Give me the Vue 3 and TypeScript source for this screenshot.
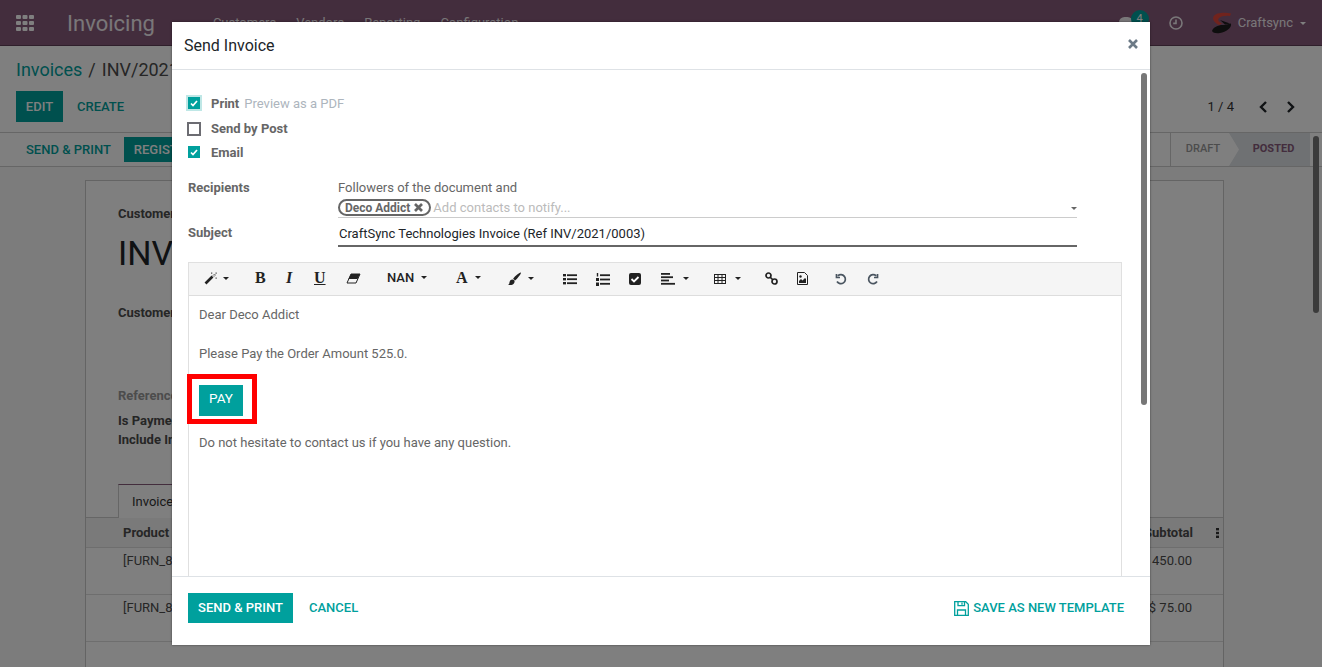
<script setup lang="ts">
const menus: string[] = ['Customers', 'Vendors', 'Reporting', 'Configuration']
const rows: { code: string; total: string }[] = [
  { code: '[FURN_8', total: '$ 450.00' },
  { code: '[FURN_8', total: '$ 75.00' },
]
</script>

<template>
  <div class="page">
    <header class="navbar">
      <svg class="apps" width="18" height="16" viewBox="0 0 18 16" fill="#fff">
        <rect x="0" y="0" width="5" height="4" rx="1" /><rect x="6.5" y="0" width="5" height="4" rx="1" /><rect x="13" y="0" width="5" height="4" rx="1" />
        <rect x="0" y="6" width="5" height="4" rx="1" /><rect x="6.5" y="6" width="5" height="4" rx="1" /><rect x="13" y="6" width="5" height="4" rx="1" />
        <rect x="0" y="12" width="5" height="4" rx="1" /><rect x="6.5" y="12" width="5" height="4" rx="1" /><rect x="13" y="12" width="5" height="4" rx="1" />
      </svg>
      <span class="brand">Invoicing</span>
      <nav class="menu"><span v-for="m in menus" :key="m">{{ m }}</span></nav>
      <div class="nav-right">
        <span class="chat"><i class="bubble"></i><b class="badge">4</b></span>
        <svg class="clock" width="14" height="14" viewBox="0 0 14 14" fill="none" stroke="#fff" stroke-width="1.6">
          <circle cx="7" cy="7" r="6" /><path d="M7 3.5V7.4H4.2" />
        </svg>
        <svg class="logo" width="22" height="22" viewBox="0 0 22 22">
          <path d="M20 1.500C14 .2 5 .5 2.500 4.500 1 8 4 11 8 13L11 11.500C8 10 6 8 8 6 10 4 15 3.500 19 4Z" fill="#e2473a" />
          <path d="M9 8 19 11.500 14 12.500Z" fill="#1c1c1c" />
          <path d="M1 19C2 15 8 12.500 13 13L20 11.500C21 16 15 20 9 21 5 21.500 2 21 1 19Z" fill="#1c1c1c" />
        </svg>
        <span class="user">Craftsync</span><i class="caret user-caret"></i>
      </div>
    </header>

    <section class="control">
      <div class="crumbs"><a>Invoices</a><span>/</span><span>INV/2021/0003</span></div>
      <div class="cp-row">
        <button class="btn-primary edit">EDIT</button>
        <button class="btn-link create">CREATE</button>
        <div class="pager">
          <span>1 / 4</span>
          <svg width="10" height="12" viewBox="0 0 10 12" fill="none" stroke="#212529" stroke-width="2.400"><path d="M8 1 3 6l5 5" /></svg>
          <svg width="10" height="12" viewBox="0 0 10 12" fill="none" stroke="#212529" stroke-width="2.400"><path d="m2 1 5 5-5 5" /></svg>
        </div>
      </div>
    </section>
    <section class="statusbar">
      <button class="btn-link">SEND &amp; PRINT</button>
      <button class="btn-primary reg">REGISTER PAYMENT</button>
      <div class="steps">
        <span class="step">DRAFT</span>
        <span class="step current">POSTED</span>
      </div>
    </section>

    <main class="content">
      <div class="sheet">
        <div class="sheet-pad">
          <div class="f-label">Customer Invoice</div>
          <h1>INV/2021/0003</h1>
          <div class="f-label cust">Customer</div>
          <div class="f-label ref">Reference</div>
          <div class="f-label pay-l">Is Payment</div>
          <div class="f-label inc">Include In</div>
        </div>
        <div class="tabs"><span class="tab">Invoice Lines</span></div>
        <div class="t-row t-head">
          <span>Product</span><span>Subtotal</span>
          <svg class="dots" width="3" height="10" viewBox="0 0 3 10" fill="#333"><rect width="3" height="2.400" /><rect y="3.800" width="3" height="2.400" /><rect y="7.600" width="3" height="2.400" /></svg>
        </div>
        <div v-for="(r, i) in rows" :key="i" class="t-row t-body"><span>{{ r.code }}</span><span>{{ r.total }}</span></div>
      </div>
    </main>
    <div class="page-scroll"></div>

    <div class="backdrop"></div>

    <div class="modal">
      <div class="m-head">
        <span class="m-title">Send Invoice</span>
        <svg class="close" width="10" height="10" viewBox="0 0 10 10" stroke="#6c7a86" stroke-width="2.600"><path d="m1 1 8 8M9 1 1 9" /></svg>
      </div>
      <div class="m-body">
        <div class="m-scroll"></div>
        <div class="checks">
          <label class="check"><i class="box on focus"><svg width="8" height="7" viewBox="0 0 8 7" fill="none" stroke="#fff" stroke-width="1.700"><path d="m1 3.500 2 2 4-4.500" /></svg></i><b>Print</b><em>Preview as a PDF</em></label>
          <label class="check"><i class="box off"></i><b>Send by Post</b></label>
          <label class="check"><i class="box on"><svg width="8" height="7" viewBox="0 0 8 7" fill="none" stroke="#fff" stroke-width="1.700"><path d="m1 3.500 2 2 4-4.500" /></svg></i><b>Email</b></label>
        </div>
        <div class="form">
          <b class="lbl">Recipients</b>
          <div class="rcpt">
            <div>Followers of the document and</div>
            <div class="many2many">
              <span class="tag">Deco Addict <svg width="9" height="9" viewBox="0 0 9 9" stroke="#666" stroke-width="2.700"><path d="m1 1 7 7M8 1 1 8" /></svg></span>
              <span class="ph">Add contacts to notify...</span>
              <i class="caret small"></i>
            </div>
          </div>
          <b class="lbl subj">Subject</b>
          <div class="subject">CraftSync Technologies Invoice (Ref INV/2021/0003)</div>
        </div>

        <div class="editor">
          <div class="toolbar">
            <span class="tool wand">
              <svg width="13" height="13" viewBox="0 0 13 13"><path d="M1.500 11.500 8.500 4.500" stroke="#222" stroke-width="2.600" /><path d="M9 3.500l1 1 1.500-1.500-1-1Z" fill="#fff" stroke="#222" stroke-width=".6" /><path d="M7 .5h1.300v1.300H7zM11.500.5h1.300v1.300h-1.300zM11.500 5.500h1.300v1.300h-1.300z" fill="#555" /></svg><i class="caret"></i>
            </span>
            <span class="tool serif b">B</span>
            <span class="tool serif i">I</span>
            <span class="tool serif u">U</span>
            <svg class="tool eraser" width="15" height="11" viewBox="0 0 15 11"><path d="M5 1h9L10 10H1Z" fill="none" stroke="#222" /><path d="M5 1h9l-2.500 5H2.500Z" fill="#222" /></svg>
            <span class="tool nan">NAN<i class="caret"></i></span>
            <span class="tool serif a">A<i class="caret"></i></span>
            <span class="tool brush">
              <svg width="15" height="14" viewBox="0 0 13 13" fill="#222"><path d="M12.500.5c.5.500-3 5.500-5.500 7.500L5.200 6.200C7.200 3.500 12-.1 12.500.5Z" /><path d="M4.500 7c1.500 0 2.500 1 2 2.500C6 12 3 12.500.5 12c1.500-.8 1-1.500 1.500-3 .4-1.200 1.300-2 2.500-2Z" /></svg><i class="caret"></i>
            </span>
            <svg class="tool ul" width="14" height="12" viewBox="0 0 14 12" fill="#222"><rect y="1" width="3" height="2.400" /><rect y="5" width="3" height="2.400" /><rect y="9" width="3" height="2.400" /><rect x="4" y="1.300" width="10" height="1.800" /><rect x="4" y="5.300" width="10" height="1.800" /><rect x="4" y="9.300" width="10" height="1.800" /></svg>
            <svg class="tool ol" width="14" height="13" viewBox="0 0 14 13" fill="#222"><rect x=".8" y="0" width="1.400" height="3.500" /><rect y="5" width="3" height="3" /><rect y="9.500" width="3" height="3.500" /><rect x="4" y="1.300" width="10" height="1.800" /><rect x="4" y="5.600" width="10" height="1.800" /><rect x="4" y="9.900" width="10" height="1.800" /></svg>
            <svg class="tool chk" width="12" height="12" viewBox="0 0 12 12"><rect width="12" height="12" rx="2" fill="#222" /><path d="m2.500 6 2.500 2.500 4.500-4.500" fill="none" stroke="#fff" stroke-width="1.800" /></svg>
            <span class="tool align">
              <svg width="14" height="12" viewBox="0 0 14 12" fill="#222"><rect width="9" height="1.800" y="0" /><rect width="12" height="1.800" y="3.300" /><rect width="8" height="1.800" y="6.600" /><rect width="14" height="1.800" y="9.900" /></svg><i class="caret"></i>
            </span>
            <span class="tool table">
              <svg width="12" height="10" viewBox="0 0 12 10" fill="none" stroke="#222"><rect x=".5" y=".5" width="11" height="9" /><path d="M.5 3.500h11M.5 6.500h11M4 .5v9M8 .5v9" /></svg><i class="caret"></i>
            </span>
            <svg class="tool link" width="13" height="13" viewBox="0 0 13 13" fill="none" stroke="#222" stroke-width="1.700"><circle cx="3.500" cy="3.500" r="2.500" /><circle cx="9.500" cy="9.500" r="2.500" /><path d="m5 5 3 3" /></svg>
            <svg class="tool pic" width="11" height="13" viewBox="0 0 11 13"><path d="M.5.500h7l3 3v9H.5Z" fill="none" stroke="#222" /><path d="M2 11V9l2-2 1.500 1.500L8 6l1 1v4Z" fill="#222" /><circle cx="3.500" cy="4.500" r="1.200" fill="#222" /></svg>
            <svg class="tool undo" width="12" height="12" viewBox="0 0 12 12" fill="none" stroke="#4a5560" stroke-width="1.700"><path d="M2.800 2.900A4.500 4.500 0 1 1 2 8.500" /><path d="M1.500 1v3.500H5" /></svg>
            <svg class="tool redo" width="12" height="12" viewBox="0 0 12 12" fill="none" stroke="#4a5560" stroke-width="1.700"><path d="M9.200 2.900A4.500 4.500 0 1 0 10 8.500" /><path d="M10.500 1v3.500H7" /></svg>
          </div>
          <div class="edit-area">
            <p class="p1">Dear Deco Addict</p>
            <p class="p2">Please Pay the Order Amount 525.0.</p>
            <a class="pay">PAY</a>
            <p class="p3">Do not hesitate to contact us if you have any question.</p>
            <div class="annot"></div>
          </div>
        </div>
      </div>
      <div class="m-foot">
        <button class="btn-teal">SEND &amp; PRINT</button>
        <button class="btn-text cancel">CANCEL</button>
        <button class="btn-text save">
          <svg width="15" height="15" viewBox="0 0 15 15" fill="none" stroke="#00a09d" stroke-width="1.300"><path d="M.7.700h11l2.600 2.600v11H.7Z" /><path d="M3.500 14.300V9h8v5.300M4 .7v4h6.500v-4" /><path d="M8 1.500v2.300" /></svg>
          SAVE AS NEW TEMPLATE
        </button>
      </div>
    </div>
  </div>
</template>

<style>
html, body { margin: 0; height: 100%; overflow: hidden; }
</style>

<style scoped>
* { box-sizing: border-box; }
.page { position: relative; width: 1322px; height: 667px; overflow: hidden; font: 400 13px/1.5 Roboto, "Liberation Sans", sans-serif; color: #4c4c4c; background: #f9f9f9; }
button { font: inherit; border: 0; background: none; padding: 0; }
i, em { font-style: normal; }
.caret { display: inline-block; width: 0; height: 0; border: 4px solid transparent; border-top-color: currentColor; border-bottom: 0; vertical-align: middle; }

.navbar { height: 46px; background: #875a7b; color: #fff; display: flex; align-items: center; padding: 1px 0 0 16px; border-bottom: 1px solid #5e3f56; }
.brand { font-size: 22px; margin-left: 33px; opacity: .9; }
.menu { display: flex; gap: 20px; margin-left: 58px; opacity: .9; }
.nav-right { margin-left: auto; display: flex; align-items: center; padding-right: 16px; }
.chat { position: relative; width: 14px; height: 12px; margin: -1px 36px 0 0; }
.bubble { display: block; width: 14px; height: 11px; border-radius: 6px; background: #fff; opacity: .9; }
.badge { position: absolute; left: 12px; top: -7px; width: 18px; height: 18px; border-radius: 50%; background: #00a09d; font-weight: 400; font-size: 11px; line-height: 18px; text-align: center; }
.clock { margin-right: 28px; opacity: .9; }
.user { margin-left: 5px; opacity: .9; }
.user-caret { margin-left: 7px; border-width: 3px; border-bottom: 0; }

.control { height: 87px; background: #fff; padding: 10px 16px 0; border-bottom: 1px solid #ccc; }
.crumbs { font-size: 18px; line-height: 27px; display: flex; gap: 6px; color: #4c4c4c; }
.crumbs a { color: #00a09d; }
.cp-row { display: flex; align-items: center; margin-top: 8px; }
.btn-primary { background: #00a09d; color: #fff; font-weight: 500; height: 31px; }
.btn-link { color: #00a09d; font-weight: 500; }
.edit { width: 47px; }
.create { margin-left: 14px; }
.pager { margin-left: auto; display: flex; align-items: center; gap: 18px; padding-right: 10px; font-size: 13px; color: #333; }
.pager span { margin-right: 6px; }

.statusbar { height: 34px; background: #fff; border-bottom: 1px solid #ccc; display: flex; align-items: center; padding-left: 26px; font-size: 13px; }
.reg { height: 25px; margin-left: 13px; padding: 0 10px; white-space: nowrap; font-size: 13px; }
.steps { margin-left: auto; margin-right: 12px; width: 140px; display: flex; height: 33px; align-self: flex-start; font-size: 11px; font-weight: 500; border-left: 1px solid #ccc; }
.step { display: flex; align-items: center; justify-content: center; width: 58px; padding-left: 6px; color: #999; }
.current { flex: 1; padding-left: 8px; color: #875a7b; font-weight: 700; background: #dee2e6; clip-path: polygon(0 0, 100% 0, 100% 100%, 0 100%, 10px 50%); }

.content { padding: 13px 98px 0 85px; }
.sheet { width: 1139px; height: 520px; background: #fff; border: 1px solid #c8c8c8; }
.sheet-pad { height: 303px; padding: 23px 32px 0; }
.sheet-pad h1 { margin: 7px 0 0; font-size: 34px; font-weight: 400; line-height: 44px; color: #212529; }
.f-label { font-weight: 700; color: #4c4c4c; line-height: 20px; }
.cust { margin-top: 28px; }
.ref { margin-top: 63px; color: #999; }
.pay-l { margin-top: 5px; }
.inc { margin-top: -1px; }
.tabs { height: 34px; border-bottom: 1px solid #ccc; padding-left: 32px; }
.tab { display: block; width: 100px; height: 34px; padding: 7px 13px; border: 1px solid #ccc; border-top-color: #875a7b; border-bottom: 0; background: #fff; color: #333; white-space: nowrap; }
.t-row { display: flex; justify-content: space-between; padding: 0 31px 0 37px; border-bottom: 1px solid #ddd; }
.t-head { height: 30px; align-items: center; font-weight: 700; position: relative; background: #f5f5f5; padding-right: 30px; }
.t-body { height: 47px; padding-top: 3px; }
.dots { position: absolute; right: 4px; top: 10px; }
.page-scroll { position: absolute; right: 3px; top: 136px; width: 6px; height: 177px; border-radius: 3px; background: #777; }

.backdrop { position: absolute; inset: 0; background: rgba(0, 0, 0, .5); }

.modal { position: absolute; left: 172px; top: 22px; width: 978px; height: 623px; background: #fff; box-shadow: 0 0 2px rgba(0, 0, 0, .5); display: flex; flex-direction: column; color: #666; }
.m-head { height: 48px; flex: none; display: flex; align-items: center; justify-content: space-between; padding: 0 12px; border-bottom: 1px solid #dee2e6; }
.m-title { font-size: 16px; color: #212529; }
.close { margin-top: -3px; }
.m-body { flex: 1; min-height: 0; overflow: hidden; position: relative; padding: 21px 28px 0 16px; }
.m-scroll { position: absolute; right: 3px; top: 3px; width: 6px; height: 332px; border-radius: 3px; background: #777; }

.checks { display: flex; flex-direction: column; }
.check { display: flex; align-items: center; height: 24.500px; }
.check:nth-child(2) { padding-top: 2px; }
.check b { margin-left: 11px; font-weight: 700; color: #666; }
.check em { margin-left: 5px; color: #adb5bd; }
.box { width: 12px; height: 12px; display: flex; align-items: center; justify-content: center; flex: none; }
.on { background: #00a09d; }
.focus { box-shadow: 0 0 0 2px rgba(0, 160, 157, .25); }
.off { border: 2px solid #6c6c72; width: 14px; height: 14px; margin: 0 -1px; }

.form { margin-top: 13px; display: grid; grid-template-columns: 150px 739px; }
.lbl { font-weight: 700; color: #666; line-height: 20px; }
.rcpt div:first-child { line-height: 20px; }
.many2many { display: flex; align-items: center; height: 20px; padding-top: 1px; border-bottom: 1px solid #ccc; position: relative; }
.tag { display: inline-flex; align-items: center; gap: 4px; height: 17px; padding: 0 6px 0 5px; border: 2px solid #666; border-radius: 9px; font-size: 12px; font-weight: 700; color: #666; }
.ph { margin-left: 2px; font-size: 13px; color: #bbb; }
.small { position: absolute; right: 0; top: 9px; border-width: 3px; border-bottom: 0; }
.subj { margin-top: 5px; }
.subject { margin-top: 5px; height: 24px; border-bottom: 2px solid #666; color: #212529; padding-left: 1px; line-height: 21px; }

.editor { margin-top: 15px; border: 1px solid #e0e0e0; height: 500px; }
.toolbar { height: 33px; background: #f5f5f5; border-bottom: 1px solid #ddd; display: flex; align-items: center; color: #222; position: relative; }
.tool { position: absolute; display: inline-flex; align-items: center; gap: 4px; }
.tool .caret { border-width: 3px; border-bottom: 0; margin-left: 1px; }
.serif { font-family: "Liberation Serif", serif; font-size: 16px; font-weight: 700; top: 5px; line-height: 20px; }
.wand { left: 15px; top: 9px; gap: 5px; }
.b { left: 66px; }
.i { left: 97px; font-style: italic; }
.u { left: 125px; text-decoration: underline; text-decoration-thickness: 1px; }
.eraser { left: 157px; top: 10px; }
.nan { left: 198px; top: 5px; line-height: 20px; font-weight: 500; font-size: 13px; gap: 6px; }
.a { left: 267px; gap: 6px; }
.brush { left: 318px; top: 9px; gap: 5px; }
.ul { left: 374px; top: 10px; }
.ol { left: 407px; top: 10px; }
.chk { left: 440px; top: 10px; }
.align { left: 472px; top: 10px; gap: 7px; }
.table { left: 525px; top: 11px; gap: 8px; }
.link { left: 576px; top: 9px; }
.pic { left: 608px; top: 9px; }
.undo { left: 646px; top: 10px; }
.redo { left: 678px; top: 10px; }

.edit-area { position: relative; padding: 9px 10px 8px; height: 460px; }
.edit-area p { margin: 0; font-size: 13px; line-height: 20px; color: #666; }
.edit-area .p2 { margin-top: 19px; }
.pay { display: block; width: 44px; height: 31px; margin-top: 21px; background: #00a09d; color: #fff; font-size: 13.500px; line-height: 27px; text-align: center; }
.edit-area .p3 { margin-top: 17px; }
.annot { position: absolute; left: -2px; top: 78px; width: 70px; height: 50px; border: 5px solid #f00; }

.m-foot { height: 69px; flex: none; border-top: 1px solid #dee2e6; display: flex; align-items: center; padding: 0 26px 6px 16px; }
.btn-teal { width: 105px; height: 30px; background: #00a09d; color: #fff; font-weight: 500; }
.btn-text { color: #00a09d; font-weight: 500; }
.cancel { margin-left: 16px; }
.save { margin-left: auto; display: flex; align-items: center; gap: 4px; }
</style>
